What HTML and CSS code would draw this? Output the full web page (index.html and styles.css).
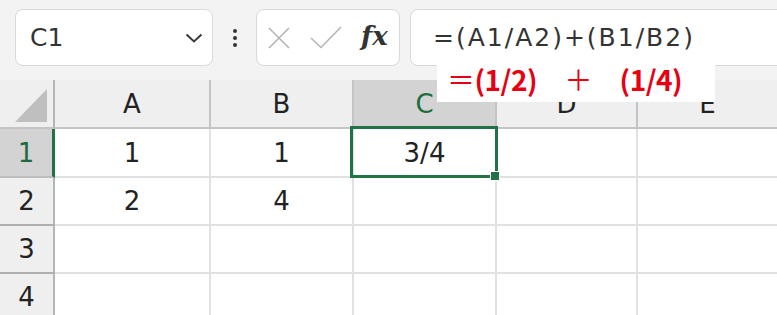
FILE: index.html
```html
<!DOCTYPE html>
<html lang="ja">
<head>
<meta charset="utf-8">
<title>Excel</title>
<link rel="stylesheet" href="styles.css">
</head>
<body>
<div class="page">
  <div class="toolbar">
    <div class="namebox">
      <span class="name">C1</span>
      <svg class="chev" width="18" height="10" viewBox="0 0 18 10"><path d="M1.5 1.5 L9 8.5 L16.5 1.5" fill="none" stroke="#3a3a3a" stroke-width="2"/></svg>
    </div>
    <div class="dots"><i></i><i></i><i></i></div>
    <div class="fxbox">
      <svg class="ic-x" width="24" height="24" viewBox="0 0 24 24"><path d="M2 2 L22 22 M22 2 L2 22" stroke="#b4b4b4" stroke-width="1.6" fill="none"/></svg>
      <svg class="ic-ok" width="32" height="24" viewBox="0 0 32 24"><path d="M1 13 L11 22.5 L31 2" stroke="#b4b4b4" stroke-width="1.6" fill="none"/></svg>
      <span class="fx">fx</span>
    </div>
    <div class="formula">=(A1/A2)+(B1/B2)</div>
  </div>

  <div class="grid">
    <div class="hd corner"><svg width="55" height="49" viewBox="0 0 55 49"><polygon points="47,9 47,42 15,42" fill="#bfbfbf"/></svg></div>
    <div class="hd col">A</div>
    <div class="hd col">B</div>
    <div class="hd col sel">C</div>
    <div class="hd col">D</div>
    <div class="hd col last">E</div>

    <div class="rh sel">1</div>
    <div class="c">1</div>
    <div class="c">1</div>
    <div class="c active">3/4<span class="selbox"></span><span class="handle"></span></div>
    <div class="c"></div>
    <div class="c last"></div>

    <div class="rh">2</div>
    <div class="c">2</div>
    <div class="c">4</div>
    <div class="c"></div>
    <div class="c"></div>
    <div class="c last"></div>

    <div class="rh">3</div>
    <div class="c"></div>
    <div class="c"></div>
    <div class="c"></div>
    <div class="c"></div>
    <div class="c last"></div>

    <div class="rh">4</div>
    <div class="c"></div>
    <div class="c"></div>
    <div class="c"></div>
    <div class="c"></div>
    <div class="c last"></div>
  </div>

  <div class="note"><span class="op">＝</span>(1/2)　<span class="op">＋</span>　(1/4)</div>
</div>
</body>
</html>
```

FILE: styles.css
```css
* { box-sizing: border-box; }
html, body { margin: 0; padding: 0; }
body {
  width: 777px;
  height: 315px;
  overflow: hidden;
  background: #ffffff;
  font-family: "DejaVu Sans", sans-serif;
  color: #222;
}
.page { position: relative; width: 777px; height: 315px; overflow: hidden; }

.toolbar {
  height: 80px;
  background: #f3f3f3;
  display: flex;
  align-items: flex-start;
  padding: 9px 0 0 15px;
  overflow: hidden;
}
.toolbar > * { flex-shrink: 0; }
.namebox {
  width: 198px;
  height: 57px;
  background: #fff;
  border: 1px solid #d9d9d9;
  border-radius: 8px;
  display: flex;
  align-items: center;
  justify-content: space-between;
  padding: 0 9px 0 14px;
}
.name { font-size: 25px; color: #333; }
.chev { display: block; }
.dots {
  width: 43px;
  height: 57px;
  display: flex;
  flex-direction: column;
  align-items: center;
  justify-content: center;
  gap: 3px;
}
.dots i { display: block; width: 4px; height: 4px; border-radius: 50%; background: #333; }
.fxbox {
  width: 144px;
  height: 57px;
  background: #fff;
  border: 1px solid #d9d9d9;
  border-radius: 8px;
  display: flex;
  align-items: center;
  padding: 0 0 0 10px;
}
.ic-x { display: block; margin-top: 1px; }
.ic-ok { display: block; margin-left: 19px; margin-top: -2px; }
.fx {
  margin-left: 19px;
  font-family: "DejaVu Serif", serif;
  font-style: italic;
  font-weight: bold;
  font-size: 26px;
  color: #333;
  margin-top: -4px;
}
.formula {
  margin-left: 10px;
  width: 400px;
  height: 57px;
  background: #fff;
  border: 1px solid #d9d9d9;
  border-radius: 8px;
  padding: 0 0 0 22px;
  display: flex;
  align-items: center;
  font-size: 25px;
  letter-spacing: 2px;
  color: #333;
}

.grid {
  display: grid;
  grid-template-columns: 55px 156px 143px 143px 141px 1fr;
  grid-template-rows: 49px 49px 48px 48px 48px;
  font-size: 26px;
}
.hd {
  background: #efefef;
  border-right: 2px solid #c4c4c4;
  border-bottom: 2px solid #c4c4c4;
  display: flex;
  align-items: center;
  justify-content: center;
  color: #222;
}
.hd.corner { display: block; border-right-color: #b5b5b5; }
.hd.corner svg { display: block; }
.hd.sel { background: #d3d3d3; color: #1d6b40; border-bottom-color: #217346; }
.hd.last { border-right: none; }
.rh {
  background: #efefef;
  border-right: 2px solid #b5b5b5;
  border-bottom: 2px solid #b0b0b0;
  display: flex;
  align-items: center;
  justify-content: center;
}
.rh.sel { background: #d3d3d3; color: #1d6b40; border-right: 3px solid #217346; border-bottom-color: #bdbdbd; }
.c {
  border-right: 2px solid #e1e1e1;
  border-bottom: 2px solid #e1e1e1;
  display: flex;
  align-items: center;
  justify-content: center;
  color: #222;
}
.c.last { border-right: none; }
.c.active { position: relative; }
.selbox {
  position: absolute;
  left: -4px;
  top: -3px;
  width: 148px;
  height: 52px;
  border: 3px solid #217346;
}
.handle {
  position: absolute;
  left: 136px;
  top: 42px;
  width: 10px;
  height: 10px;
  background: #217346;
  border: 1px solid #fff;
}

.note {
  position: absolute;
  left: 437px;
  top: 64px;
  width: 278px;
  height: 38px;
  background: #fff;
  color: #e60012;
  font-family: "Noto Sans CJK JP", sans-serif;
  font-weight: bold;
  font-size: 28px;
  line-height: 30px;
  letter-spacing: -0.5px;
  padding-left: 10px;
  white-space: nowrap;
}
.note .op { font-weight: normal; }
```
